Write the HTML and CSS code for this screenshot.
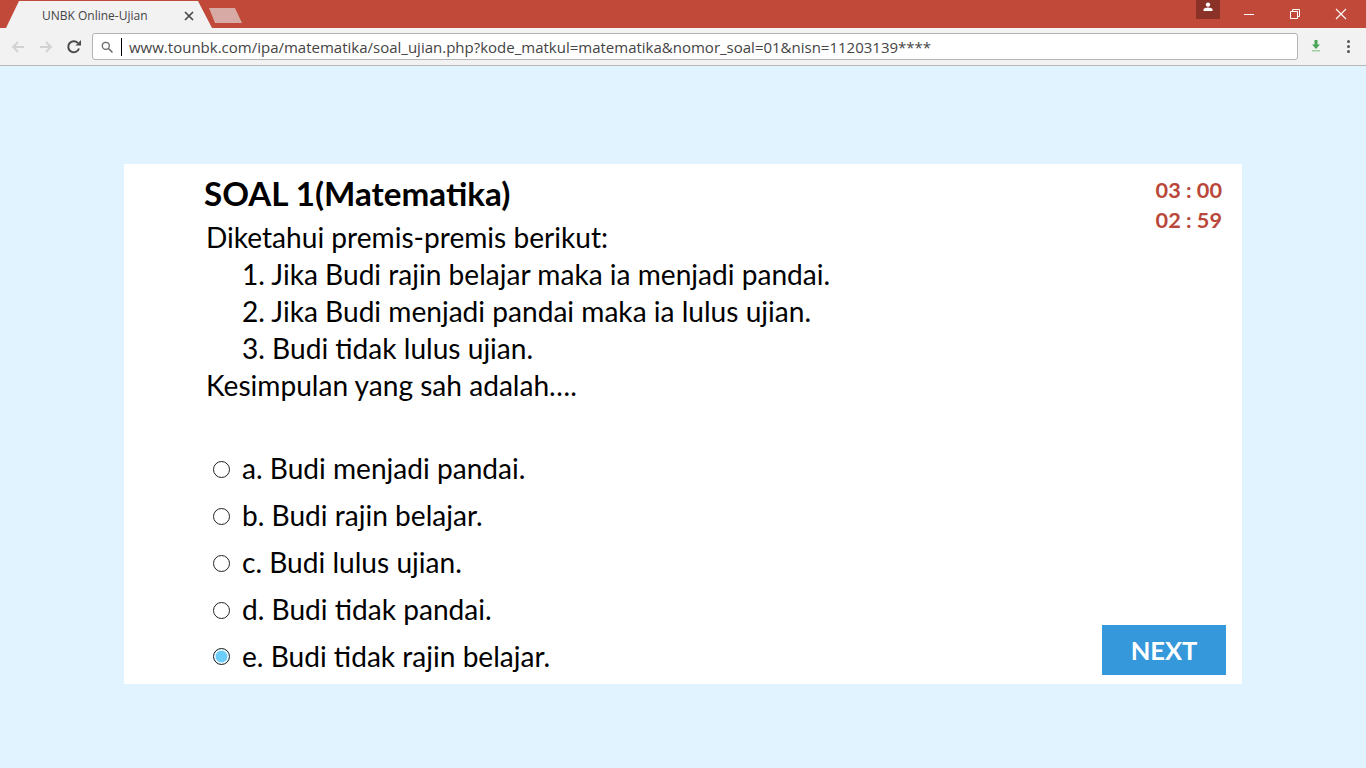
FILE: index.html
```html
<!DOCTYPE html>
<html lang="en">
  <head>
    <meta charset="UTF-8" />
    <meta name="viewport" content="width=device-width, initial-scale=1.0" />
    <title>UNBK Online-Ujian</title>
    <link rel="stylesheet" href="styles.css">
  </head>
  <body>
    <div class="tabstrip">
      <div class="tab">
        <span class="tab-title">UNBK Online-Ujian</span>
        <svg class="tab-close" width="10" height="10" viewBox="0 0 10 10"><path d="M1 1l8 8M9 1l-8 8" stroke="#444" stroke-width="1.6" fill="none"/></svg>
      </div>
      <div class="newtab"></div>
      <div class="winbtns">
        <div class="profile">
          <svg width="12" height="10" viewBox="0 0 12 10"><circle cx="6" cy="2.6" r="2.2" fill="#fff"/><path d="M1.5 9V7.6C1.5 6.4 4 5.6 6 5.6s4.500.8 4.500 2V9z" fill="#fff"/></svg>
        </div>
        <div class="winbtn">
          <svg width="12" height="12" viewBox="0 0 12 12"><path d="M1 6.500h10" stroke="#fff" fill="none"/></svg>
        </div>
        <div class="winbtn">
          <svg width="12" height="12" viewBox="0 0 12 12"><path d="M1.500 3.500h7v7h-7zM3.500 3.500v-2h7v7h-2" stroke="#fff" fill="none"/></svg>
        </div>
        <div class="winbtn">
          <svg width="12" height="12" viewBox="0 0 12 12"><path d="M1 1l10 10M11 1L1 11" stroke="#fff" stroke-width="1.1" fill="none"/></svg>
        </div>
      </div>
    </div>
    <div class="toolbar">
      <svg class="navicon" width="16" height="16" viewBox="0 0 16 16"><path d="M14 8H3M8 3L3 8l5 5" stroke="#d3d3d3" stroke-width="2" fill="none"/></svg>
      <svg class="navicon" width="16" height="16" viewBox="0 0 16 16"><path d="M2 8h11M8 3l5 5-5 5" stroke="#d3d3d3" stroke-width="2" fill="none"/></svg>
      <svg class="navicon" width="16" height="16" viewBox="0 0 16 16"><path d="M13 9.500A5.500 5.500 0 1 1 11.800 4" stroke="#4a4a4a" stroke-width="2" fill="none"/><path d="M9.500 6.500H15V1z" fill="#4a4a4a"/></svg>
      <div class="omnibox">
        <svg width="12" height="12" viewBox="0 0 12 12"><circle cx="4.800" cy="4.800" r="3.500" stroke="#666" stroke-width="1.300" fill="none"/><path d="M7.500 7.500l4 4" stroke="#666" stroke-width="1.500"/></svg>
        <span class="caret"></span>
        <span class="url">www.tounbk.com/ipa/matematika/soal_ujian.php?kode_matkul=matematika&amp;nomor_soal=01&amp;nisn=11203139****</span>
      </div>
      <svg class="download" width="10" height="12" viewBox="0 0 10 12"><path d="M3.500 0h3v4.500H9L5 9 1 4.500h2.500z" fill="#4aa457"/><path d="M1 10.800h8" stroke="#8cc795" stroke-width="1.200"/></svg>
      <div class="menu"><i></i><i></i><i></i></div>
    </div>
    <main class="page">
      <section class="card">
        <div class="soal">
          <h1>SOAL 1(Matematika)</h1>
          <p>Diketahui premis-premis berikut:</p>
          <ol>
            <li>1. Jika Budi rajin belajar maka ia menjadi pandai.</li>
            <li>2. Jika Budi menjadi pandai maka ia lulus ujian.</li>
            <li>3. Budi tidak lulus ujian.</li>
          </ol>
          <p>Kesimpulan yang sah adalah….</p>
          <div class="options">
            <div class="option"><span class="radio"></span>a. Budi menjadi pandai.</div>
            <div class="option"><span class="radio"></span>b. Budi rajin belajar.</div>
            <div class="option"><span class="radio"></span>c. Budi lulus ujian.</div>
            <div class="option"><span class="radio"></span>d. Budi tidak pandai.</div>
            <div class="option"><span class="radio checked"></span>e. Budi tidak rajin belajar.</div>
          </div>
        </div>
        <aside class="side">
          <div class="timer">
            <div>03 : 00</div>
            <div>02 : 59</div>
          </div>
          <div class="next">NEXT</div>
        </aside>
      </section>
    </main>
  </body>
</html>
```

FILE: styles.css
```css
html,
body {
  height: 100%;
}
body {
  margin: 0;
  display: flex;
  flex-direction: column;
  overflow: hidden;
  background-color: #e1f3ff;
  font-family: Lato, "Open Sans", sans-serif;
  color: #000;
}
.tabstrip {
  flex: none;
  height: 28px;
  display: flex;
  align-items: flex-end;
  background-color: #c0493a;
}
.tab {
  width: 206px;
  height: 27px;
  margin-left: 6px;
  padding: 2px 18px 0 36px;
  box-sizing: border-box;
  display: flex;
  align-items: center;
  justify-content: space-between;
  background-color: #f2f2f2;
  clip-path: polygon(0 100%, 13px 0, 192px 0, 206px 100%);
}
.tab-title {
  font-family: "Open Sans", sans-serif;
  font-size: 12px;
  color: #444;
}
.newtab {
  width: 34px;
  height: 15px;
  margin: 0 0 5px -3px;
  background-color: #d7aaa6;
  clip-path: polygon(0 0, 26px 0, 33px 100%, 6px 100%);
}
.winbtns {
  margin-left: auto;
  padding-right: 2px;
  align-self: flex-start;
  display: flex;
}
.profile {
  width: 24px;
  height: 19px;
  margin-right: 6px;
  display: flex;
  justify-content: center;
  padding-top: 2px;
  box-sizing: border-box;
  background-color: #8a3228;
}
.winbtn {
  width: 46px;
  height: 27px;
  display: flex;
  align-items: center;
  justify-content: center;
}
.toolbar {
  flex: none;
  height: 38px;
  box-sizing: border-box;
  padding-left: 10px;
  display: flex;
  align-items: center;
  gap: 12px;
  background-color: #f2f2f2;
  border-bottom: 1px solid #b8b8b8;
}
.omnibox {
  width: 1206px;
  height: 27px;
  box-sizing: border-box;
  margin-left: -2px;
  padding-left: 8px;
  display: flex;
  align-items: center;
  background-color: #fff;
  border: 1px solid #b4b4b4;
  border-radius: 3px;
}
.caret {
  width: 1px;
  height: 18px;
  margin: 0 7px 0 8px;
  background-color: #000;
}
.url {
  font-family: "Open Sans", sans-serif;
  font-size: 15px;
  color: #444;
  white-space: nowrap;
}
.download {
  margin: -2px 0 0 1px;
}
.menu {
  margin-left: 14px;
  display: flex;
  flex-direction: column;
  gap: 2px;
}
.menu i {
  width: 3px;
  height: 3px;
  background-color: #555;
  border-radius: 50%;
}
.page {
  flex: 1;
  min-height: 0;
  padding: 98px 124px 84px;
  display: flex;
}
.card {
  flex: 1;
  box-sizing: border-box;
  padding: 10px 16px 9px 80px;
  display: flex;
  justify-content: space-between;
  background-color: #fff;
}
.soal {
  font-size: 28.1px;
  line-height: 37px;
}
h1 {
  margin: 0 0 7px;
  font-size: 33.2px;
  line-height: 38px;
  font-weight: 700;
}
.soal p {
  margin: 0 0 0 2px;
}
ol {
  margin: 0;
  padding: 0 0 0 38px;
  list-style: none;
}
.options {
  margin-top: 41px;
  padding-left: 9px;
}
.option {
  height: 47px;
  display: flex;
  align-items: center;
  gap: 12px;
}
.radio {
  width: 17px;
  height: 17px;
  margin-top: 2px;
  box-sizing: border-box;
  border: 1.5px solid #222;
  border-radius: 50%;
  background-color: #fff;
}
.checked {
  margin-top: 0;
  background-color: #6dcdf9;
  box-shadow: inset 0 0 0 1.5px #fff;
}
.side {
  display: flex;
  flex-direction: column;
  align-items: flex-end;
  justify-content: space-between;
}
.timer {
  margin: 1px 4px 0 0;
  font-size: 21.7px;
  line-height: 30px;
  font-weight: 700;
  color: #b9473a;
}
.next {
  width: 124px;
  height: 50px;
  display: flex;
  align-items: center;
  justify-content: center;
  font-size: 25.5px;
  font-weight: 700;
  color: #fff;
  background-color: #3498db;
}
```
